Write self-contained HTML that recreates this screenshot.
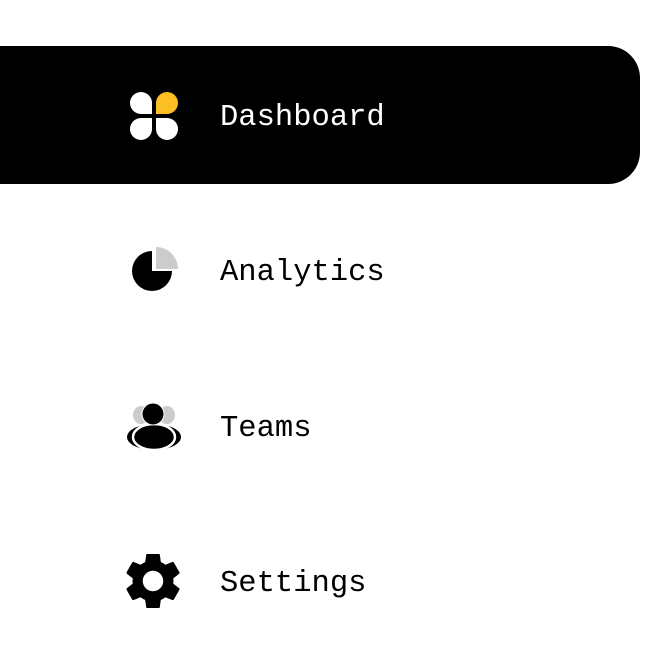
<!DOCTYPE html>
<html><head><style>
body{margin:0;width:660px;height:660px;background:#fff;position:relative;overflow:hidden;font-family:"Liberation Mono",monospace}
.bar{position:absolute;left:0;top:46px;width:640px;height:138px;background:#000;border-radius:0 32px 32px 0}
.t{position:absolute;left:220px;font-size:30.5px;line-height:1}
svg{position:absolute}
</style></head><body>
<div class="bar"></div>
<svg style="left:128px;top:90px" width="52" height="52" viewBox="0 0 52 52">
<path d="M2 13a11 11 0 0 1 22 0v11h-11a11 11 0 0 1-11-11z" fill="#fff"/>
<path d="M28 13a11 11 0 0 1 22 0a11 11 0 0 1-11 11h-11z" fill="#fbbf24"/>
<path d="M2 39a11 11 0 0 1 11-11h11v11a11 11 0 0 1-22 0z" fill="#fff"/>
<path d="M28 28h11a11 11 0 0 1 11 11a11 11 0 0 1-22 0z" fill="#fff"/>
</svg>
<div class="t" style="top:103px;color:#fff">Dashboard</div>
<svg style="left:128px;top:245px" width="52" height="52" viewBox="0 0 52 52">
<path d="M28 2a22 22 0 0 1 22 22h-22z" fill="#ccc"/>
<path d="M24 6v20h20a20 20 0 1 1-20-20z" fill="#000"/>
</svg>
<div class="t" style="top:258px">Analytics</div>
<svg style="left:126px;top:401px" width="56" height="50" viewBox="0 0 56 50">
<ellipse cx="15" cy="14" rx="8" ry="9" fill="#ccc"/>
<ellipse cx="41" cy="14" rx="8" ry="9" fill="#ccc"/>
<ellipse cx="28" cy="36" rx="27" ry="13" fill="#000"/>
<ellipse cx="28" cy="36" rx="21" ry="13" fill="none" stroke="#fff" stroke-width="2.5"/>
<circle cx="27" cy="13" r="11" fill="#000" stroke="#fff" stroke-width="1"/>
</svg>
<div class="t" style="top:414px">Teams</div>
<svg style="left:126px;top:554px" width="54" height="54" viewBox="2.5 2.5 19 19">
<path d="M19.14 12.94c.04-.3.06-.61.06-.94 0-.32-.02-.64-.07-.94l2.03-1.58a.49.49 0 0 0 .12-.61l-1.92-3.32a.488.488 0 0 0-.59-.22l-2.39.96c-.5-.38-1.030-.7-1.62-.94l-.36-2.54a.484.484 0 0 0-.48-.41h-3.84c-.24 0-.43.17-.47.41l-.36 2.54c-.59.24-1.13.57-1.620.94l-2.39-.96c-.22-.08-.47 0-.59.22L2.74 8.87c-.12.21-.08.47.12.61l2.03 1.58c-.05.3-.09.63-.09.94s.02.64.07.94l-2.03 1.58a.49.49 0 0 0-.12.61l1.92 3.32c.12.22.37.29.59.22l2.39-.96c.5.38 1.03.7 1.62.94l.36 2.54c.05.24.24.41.48.41h3.84c.24 0 .44-.17.47-.41l.36-2.54c.59-.24 1.13-.56 1.62-.94l2.39.96c.22.08.47 0 .59-.22l1.92-3.32c.12-.22.07-.47-.12-.61l-2.01-1.58zM12 15.6c-1.98 0-3.6-1.62-3.6-3.6s1.62-3.6 3.6-3.6 3.6 1.62 3.6 3.6-1.62 3.6-3.6 3.6z" fill="#000"/>
</svg>
<div class="t" style="top:569px">Settings</div>
</body></html>
